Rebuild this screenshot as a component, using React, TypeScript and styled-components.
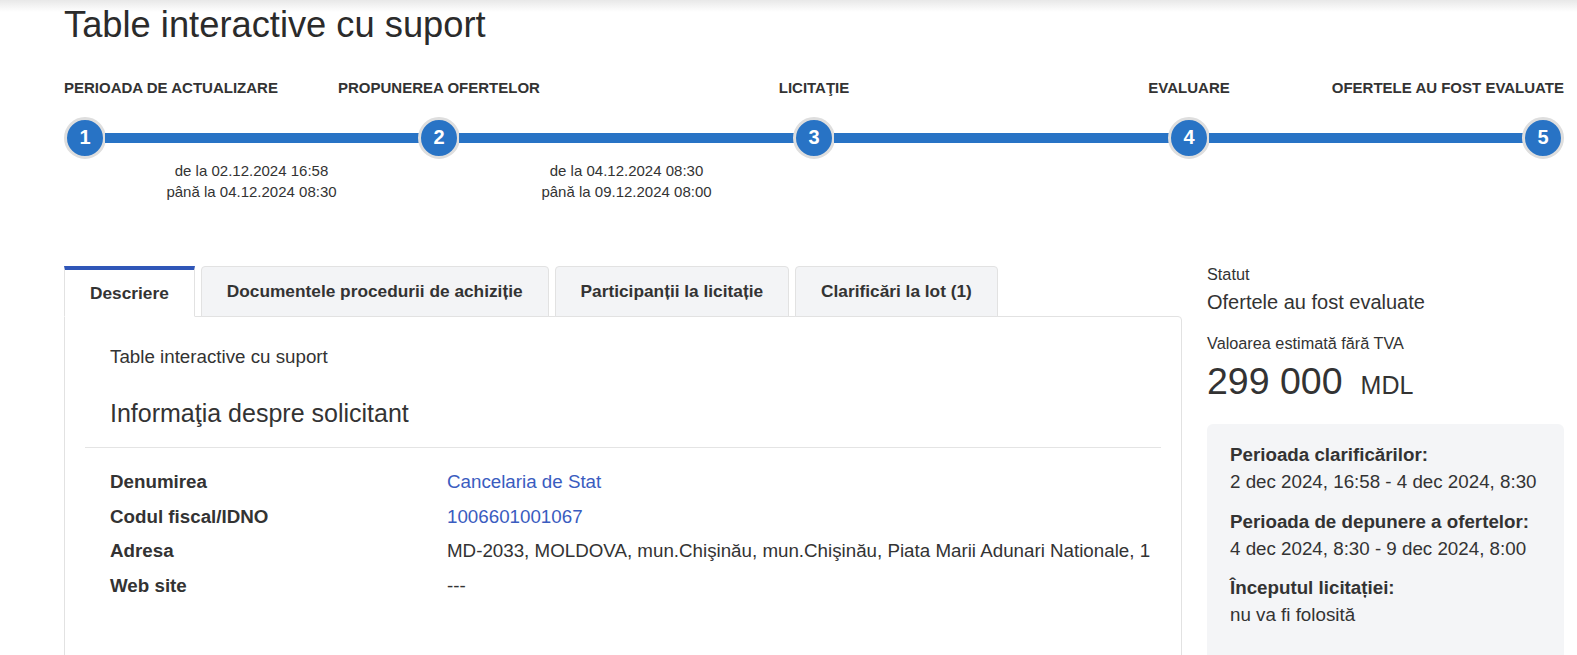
import { Fragment } from "react";
import styled, { createGlobalStyle } from "styled-components";

const BLUE = "#2873c5";
const TEXT = "#333333";

const GlobalStyle = createGlobalStyle`
  body {
    margin: 0;
    background: linear-gradient(#e8e8e8, #ffffff 12px) no-repeat #ffffff;
    font-family: "Liberation Sans", Arial, sans-serif;
    font-size: 18.75px;
    line-height: 1.42857;
    color: ${TEXT};
  }
`;

type Stage = { n: number; label: string; from?: string; to?: string };

const stages: Stage[] = [
  { n: 1, label: "PERIOADA DE ACTUALIZARE", from: "02.12.2024 16:58", to: "04.12.2024 08:30" },
  { n: 2, label: "PROPUNEREA OFERTELOR", from: "04.12.2024 08:30", to: "09.12.2024 08:00" },
  { n: 3, label: "LICITAŢIE" },
  { n: 4, label: "EVALUARE" },
  { n: 5, label: "OFERTELE AU FOST EVALUATE" },
];

// end dots sit inside the track, so the outer segments are a little shorter
const segmentGrow = [312, 333, 333, 312];

const tabs = [
  "Descriere",
  "Documentele procedurii de achiziție",
  "Participanții la licitație",
  "Clarificări la lot (1)",
];

const applicant = [
  { label: "Denumirea", value: "Cancelaria de Stat", link: true },
  { label: "Codul fiscal/IDNO", value: "1006601001067", link: true },
  {
    label: "Adresa",
    value: "MD-2033, MOLDOVA, mun.Chişinău, mun.Chişinău, Piata Marii Adunari Nationale, 1",
  },
  { label: "Web site", value: "---" },
];

const periods = [
  { term: "Perioada clarificărilor:", value: "2 dec 2024, 16:58 - 4 dec 2024, 8:30" },
  { term: "Perioada de depunere a ofertelor:", value: "4 dec 2024, 8:30 - 9 dec 2024, 8:00" },
  { term: "Începutul licitației:", value: "nu va fi folosită" },
];

export default function App() {
  const last = stages.length - 1;
  return (
    <>
      <GlobalStyle />
      <Page>
        <Title>Table interactive cu suport</Title>

        <StageTrack>
          {stages.map((s, i) => (
            <Fragment key={s.n}>
              <Stage $align={i === 0 ? "flex-start" : i === last ? "flex-end" : "center"}>
                <StageLabel>{s.label}</StageLabel>
                <StageDot>{s.n}</StageDot>
              </Stage>
              {i < last && <Segment $grow={segmentGrow[i]} />}
            </Fragment>
          ))}
        </StageTrack>
        <StageDates>
          {stages.slice(0, last).map((s) => (
            <DateCell key={s.n}>
              {s.from && (
                <>
                  de la {s.from}
                  <br />
                  până la {s.to}
                </>
              )}
            </DateCell>
          ))}
        </StageDates>

        <MainRow>
          <LeftCol>
            <TabList>
              {tabs.map((t, i) => (
                <Tab key={t} $active={i === 0}>
                  {t}
                </Tab>
              ))}
            </TabList>
            <TabPanel>
              <Description>Table interactive cu suport</Description>
              <SectionTitle>Informaţia despre solicitant</SectionTitle>
              <Divider />
              <InfoTable>
                {applicant.map((row) => (
                  <InfoRow key={row.label}>
                    <InfoLabel>{row.label}</InfoLabel>
                    {row.link ? <InfoLink href="#">{row.value}</InfoLink> : <span>{row.value}</span>}
                  </InfoRow>
                ))}
              </InfoTable>
            </TabPanel>
          </LeftCol>

          <Aside>
            <SmallLabel>Statut</SmallLabel>
            <StatusValue>Ofertele au fost evaluate</StatusValue>
            <SmallLabel $gap={15.5}>Valoarea estimată fără TVA</SmallLabel>
            <Amount>
              299 000<Currency>MDL</Currency>
            </Amount>
            <PeriodBox>
              {periods.map((p) => (
                <PeriodGroup key={p.term}>
                  <PeriodTerm>{p.term}</PeriodTerm>
                  <div>{p.value}</div>
                </PeriodGroup>
              ))}
            </PeriodBox>
          </Aside>
        </MainRow>
      </Page>
    </>
  );
}

const Page = styled.div`
  padding: 5px 13px 0 64px;
`;

const Title = styled.h1`
  margin: 0;
  font-size: 36.3px;
  font-weight: 400;
  line-height: 40px;
  color: #2b2b2b;
`;

const StageTrack = styled.div`
  display: flex;
  align-items: flex-end;
  margin-top: 33.5px;
`;

const Stage = styled.div<{ $align: string }>`
  flex: none;
  width: 42px;
  display: flex;
  flex-direction: column;
  align-items: ${(p) => p.$align};
`;

const StageLabel = styled.div`
  white-space: nowrap;
  font-size: 15px;
  font-weight: 700;
  line-height: 18px;
  margin-bottom: 20px;
  color: ${TEXT};
`;

const StageDot = styled.div`
  box-sizing: border-box;
  width: 42px;
  height: 42px;
  border-radius: 50%;
  border: 3px solid #dedede;
  background: ${BLUE};
  color: #ffffff;
  font-size: 20px;
  font-weight: 700;
  display: flex;
  align-items: center;
  justify-content: center;
`;

const Segment = styled.div<{ $grow: number }>`
  flex: ${(p) => p.$grow} 1 0;
  height: 10px;
  margin: 0 -1px 16px;
  background: ${BLUE};
`;

const StageDates = styled.div`
  display: grid;
  grid-template-columns: repeat(4, 1fr);
  margin-top: 1.5px;
`;

const DateCell = styled.div`
  text-align: center;
  font-size: 15px;
  line-height: 21px;
  min-height: 42px;
`;

const MainRow = styled.div`
  display: flex;
  align-items: flex-start;
  gap: 25px;
  margin-top: 61px;
`;

const LeftCol = styled.div`
  flex: 1;
  min-width: 0;
  padding-top: 3px;
`;

const TabList = styled.div`
  display: flex;
  gap: 6px;
  position: relative;
  z-index: 1;
  margin-bottom: -1px;
`;

const Tab = styled.div<{ $active?: boolean }>`
  box-sizing: border-box;
  height: 51px;
  display: flex;
  align-items: center;
  padding: 0 25px;
  font-size: 17.3px;
  font-weight: 700;
  color: ${TEXT};
  border: 1px solid #e2e2e2;
  border-radius: 4px 4px 0 0;
  background: ${(p) => (p.$active ? "#ffffff" : "#f3f4f6")};
  ${(p) =>
    p.$active &&
    `
    border-top: 4px solid #2f56b8;
    border-bottom-color: #ffffff;
    border-radius: 0;
  `}
`;

const TabPanel = styled.div`
  border: 1px solid #e2e2e2;
  border-radius: 0 4px 0 0;
  padding: 26.6px 20px 80px;
`;

const Description = styled.div`
  padding: 0 25px;
`;

const SectionTitle = styled.h3`
  margin: 30px 0 0;
  padding: 0 25px;
  font-size: 25px;
  font-weight: 400;
  line-height: 27.5px;
`;

const Divider = styled.hr`
  border: 0;
  border-top: 1px solid #e4e4e4;
  margin: 19px 0 17px;
`;

const InfoTable = styled.div`
  padding-left: 25px;
`;

const InfoRow = styled.div`
  display: grid;
  grid-template-columns: 337px 1fr;
  padding: 4px 0;
  white-space: nowrap;
`;

const InfoLabel = styled.span`
  font-weight: 700;
`;

const InfoLink = styled.a`
  color: #3a5cc0;
  text-decoration: none;
`;

const Aside = styled.aside`
  flex: none;
  width: 357px;
`;

const SmallLabel = styled.div<{ $gap?: number }>`
  font-size: 16.25px;
  line-height: 23px;
  margin-top: ${(p) => p.$gap ?? 0}px;
`;

const StatusValue = styled.div`
  font-size: 20px;
  line-height: 28px;
  margin-top: 2px;
`;

const Amount = styled.div`
  font-size: 37.5px;
  line-height: 41.25px;
  margin-top: 6px;
`;

const Currency = styled.span`
  font-size: 25px;
  margin-left: 18px;
`;

const PeriodBox = styled.div`
  margin-top: 18.5px;
  background: #f4f5f7;
  border-radius: 6px;
  padding: 18px 23px 50px;
`;

const PeriodGroup = styled.div`
  & + & {
    margin-top: 13px;
  }
`;

const PeriodTerm = styled.div`
  font-weight: 700;
`;
